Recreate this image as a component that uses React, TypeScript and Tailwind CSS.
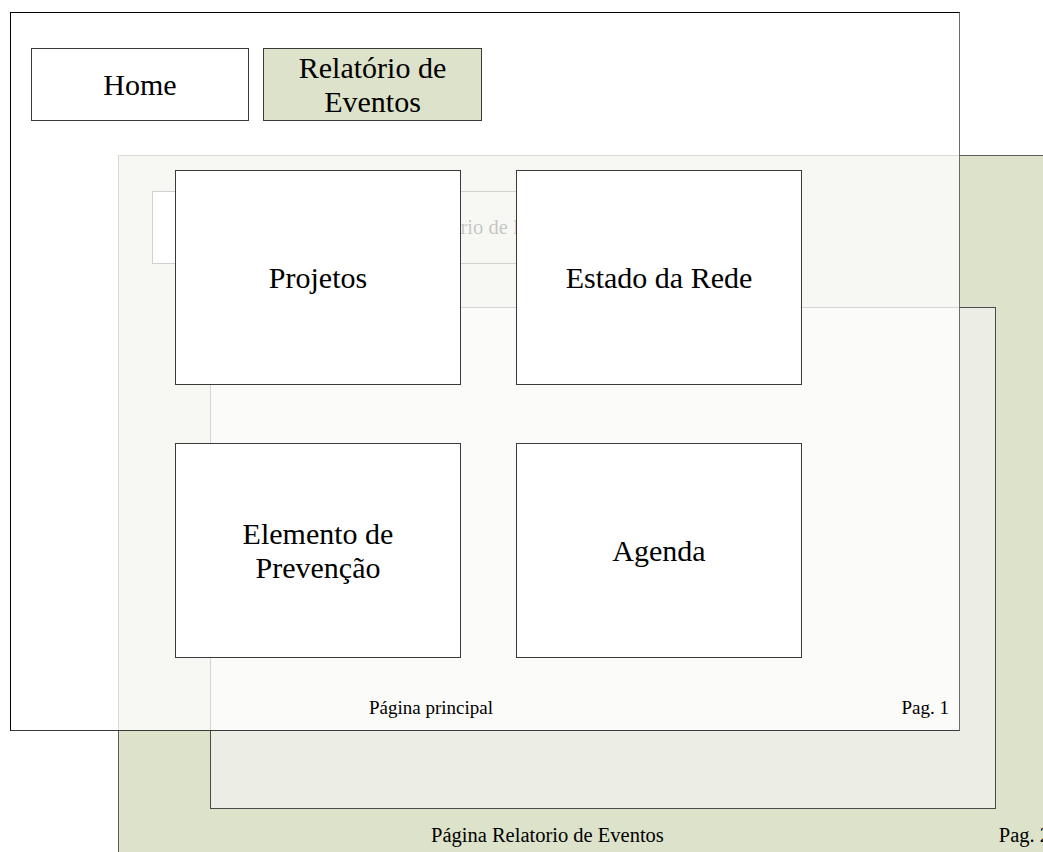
const boxClass =
  "flex items-center justify-center border border-[#3a3a3a] text-center"

const Box = ({ label, className }: { label: string; className?: string }) => (
  <div className={`${boxClass} ${className ?? ""}`}>{label}</div>
)

const tiles = ["Projetos", "Estado da Rede", "Elemento de Prevenção", "Agenda"]

export default function App() {
  return (
    <div className="relative h-[852px] w-[1043px] overflow-hidden bg-white font-['Liberation_Serif',serif] text-black">
      {/* page 2 sits behind */}
      <section className="absolute left-[118px] top-[155px] flex h-[719px] w-[950px] flex-col border border-[#5c5c5c] bg-[#dde2ca]">
        <div className="flex gap-[14px] pl-[33px] pt-[35px] text-[20.5px]">
          <Box label="Home" className="h-[73px] w-[218px] bg-white" />
          <Box
            label="Relatório de Eventos"
            className="h-[73px] w-[218px] whitespace-nowrap bg-[#dde2ca]"
          />
        </div>
        <div className="ml-[91px] mt-[43px] h-[502px] w-[786px] border border-[#4a4a4a] bg-[#ecede4]" />
        <div className="flex pl-[312px] pr-[17px] pt-[11px] text-[20.5px]">
          <span>Página Relatorio de Eventos</span>
          <span className="ml-auto">Pag. 2</span>
        </div>
      </section>

      {/* page 1 on top, slightly see-through */}
      <section className="absolute left-[10px] top-[12px] flex h-[719px] w-[950px] flex-col border border-black border-b-[#3a3a3a] border-r-[#6a6a6a] bg-[rgba(255,255,255,0.77)]">
        <div className="flex gap-[14px] pl-[20px] pt-[35px] text-[30px] leading-[34px]">
          <Box label="Home" className="h-[73px] w-[218px] bg-white" />
          <Box label="Relatório de Eventos" className="h-[73px] w-[219px] bg-[#dde2ca] px-[30px]" />
        </div>
        <div className="ml-[164px] mt-[49px] grid grid-cols-[286px_286px] gap-x-[55px] gap-y-[58px] text-[30px] leading-[34px]">
          {tiles.map((t) => (
            <Box
              key={t}
              label={t}
              className={`h-[215px] w-[286px] bg-white ${t.startsWith("Elemento") ? "px-[60px]" : ""}`}
            />
          ))}
        </div>
        <div className="mt-auto flex pb-[8px] pl-[358px] pr-[10px] text-[19px]">
          <span>Página principal</span>
          <span className="ml-auto">Pag. 1</span>
        </div>
      </section>
    </div>
  )
}
